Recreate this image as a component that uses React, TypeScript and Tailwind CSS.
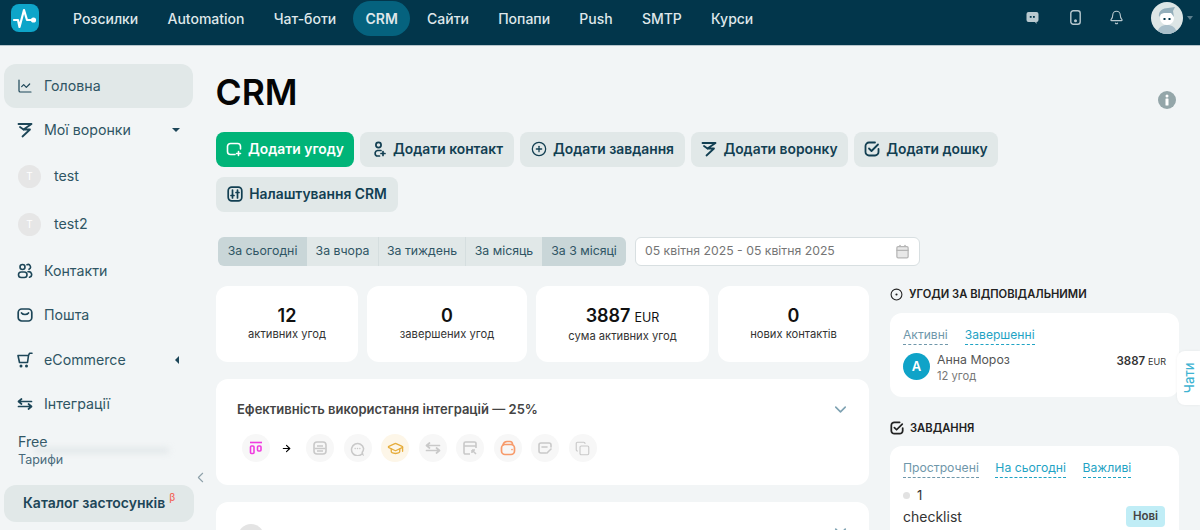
import React from "react";
import { LineChart, CirclePlus, Calendar, CircleDot, GraduationCap, Copy, ArrowRight, ChevronLeft, ChevronDown, Bell } from "lucide-react";

const Funnel = ({ size = 16 }: { size?: number }) => (
  <svg width={size} height={size} viewBox="0 0 16 16" fill="none" stroke="currentColor" strokeWidth="1.8" strokeLinecap="round" strokeLinejoin="round">
    <path d="M1.500 2h13L6.500 7.500h6.500L5.500 14.500" />
    <path d="M3 5l3.500 2.500" />
  </svg>
);
const OpenCheck = ({ size = 16, w = 1.8 }: { size?: number; w?: number }) => (
  <svg width={size} height={size} viewBox="0 0 16 16" fill="none" stroke="currentColor" strokeWidth={w} strokeLinecap="round" strokeLinejoin="round">
    <path d="M14.500 8v3a3.500 3.500 0 0 1-3.500 3.500H5A3.500 3.500 0 0 1 1.500 11V5A3.500 3.500 0 0 1 5 1.500h6" />
    <path d="M5 7.500l2.500 2.500L14 3.500" />
  </svg>
);

const navItems = ["Розсилки", "Automation", "Чат-боти", "CRM", "Сайти", "Попапи", "Push", "SMTP", "Курси"];
const buttons = [
  { label: "Додати угоду", w: "w-[138px]", primary: true, icon: <svg width="16" height="16" viewBox="0 0 16 16" fill="none" stroke="currentColor" strokeWidth="1.6" strokeLinecap="round"><path d="M9 13.500H4.500a3 3 0 0 1-3-3v-5a3 3 0 0 1 3-3h7a3 3 0 0 1 3 3V8" /><path d="M12.500 10.500v4M10.500 12.500h4" /></svg> },
  { label: "Додати контакт", w: "w-[154px]", icon: <svg width="16" height="16" viewBox="0 0 16 16" fill="none" stroke="currentColor" strokeWidth="1.7" strokeLinecap="round"><circle cx="7.500" cy="4" r="2.600" /><path d="M10 9.500H6.500a3 3 0 0 0-1 5.500h3" /><path d="M12 10.500v4M10 12.500h4" /></svg> },
  { label: "Додати завдання", w: "w-[165px]", icon: <CirclePlus size={16} strokeWidth={1.9} /> },
  { label: "Додати воронку", w: "w-[157px]", icon: <Funnel /> },
  { label: "Додати дошку", w: "w-[144px]", icon: <OpenCheck /> },
  { label: "Налаштування CRM", w: "w-[182px]", icon: <svg width="16" height="16" viewBox="0 0 16 16" fill="none" stroke="currentColor" strokeWidth="1.700" strokeLinecap="round"><rect x="1.200" y="1.200" width="13.600" height="13.600" rx="3.500" /><path d="M5.500 4v8M10.500 4v8" /><path d="M4 9.500h3M9 6.500h3" /></svg> },
];
const tabs = [
  { label: "За сьогодні", w: "w-[89px]", on: true, cls: "rounded-l-md" },
  { label: "За вчора", w: "w-[72px]", cls: "border-r border-[#d5dedf]" },
  { label: "За тиждень", w: "w-[87px]", cls: "border-r border-[#d5dedf]" },
  { label: "За місяць", w: "w-[76px]" },
  { label: "За 3 місяці", w: "w-[84px]", on: true, cls: "rounded-r-md" },
];
const stats = [
  { v: "12", l: "активних угод", w: "w-[142px]" },
  { v: "0", l: "завершених угод", w: "w-[160px]" },
  { v: "3887", u: "EUR", l: "сума активних угод", w: "w-[173px]" },
  { v: "0", l: "нових контактів", w: "w-[151px]" },
];

function SideItem({ icon, label, right, h = "h-[44px]", active }: { icon: React.ReactNode; label: string; right?: React.ReactNode; h?: string; active?: boolean }) {
  return (
    <div className={`${h} flex items-center pl-[13px] pr-[12px] rounded-xl text-[14.2px] text-[#2f5564] ${active ? "bg-[#e1e8e8]" : ""}`}>
      <span className="w-[27px] flex items-center text-[#1d4658]">{icon}</span>
      <span className="flex-1">{label}</span>
      {right}
    </div>
  );
}

function SubItem({ label }: { label: string }) {
  return (
    <div className="h-[48px] flex items-center pl-[14px] text-[14.2px] text-[#2f5564]">
      <span className="w-[23px] h-[23px] rounded-full bg-[#e6e6e6] flex items-center justify-center text-white text-[10px] mr-[13px]">T</span>
      {label}
    </div>
  );
}

const IconCircle = ({ children, bg = "bg-[#f7f7f7]", color = "text-[#c9c9c9]" }: { children: React.ReactNode; bg?: string; color?: string }) => (
  <span className={`w-[28px] h-[28px] rounded-full flex items-center justify-center ${bg} ${color}`}>{children}</span>
);

export default function App() {
  return (
    <div className="w-[1200px] h-[530px] overflow-hidden bg-[#f2f5f6] relative text-black" style={{ fontFamily: "Inter, 'Noto Sans', sans-serif" }}>
      <header className="h-[46px] bg-[#02364b] flex items-start pt-[0.500px] border-b border-[#b6c5cc]">
        <div className="mt-[3px] ml-[11px] w-[28px] h-[28px] rounded-lg bg-[#0ea5c9] flex items-center justify-center">
          <svg width="28" height="28" viewBox="0 0 28 28" fill="none" stroke="white" strokeWidth="2.200" strokeLinecap="round" strokeLinejoin="round"><path d="M3 16h4l1.500 7L13 6l3 10h6" /><circle cx="22.500" cy="16" r="1.500" fill="white" /></svg>
        </div>
        <nav className="ml-[22px] flex items-center gap-[5.200px] h-[36px]">
          {navItems.map((n) => (
            <span key={n} className={`h-[35px] px-3 flex items-center rounded-full text-[14px] font-medium text-[#dfe7ea] ${n === "CRM" ? "bg-[#05627e] font-semibold" : ""}`}>{n}</span>
          ))}
        </nav>
        <div className="ml-auto flex items-center h-[34px] text-[#b9c9cf] pr-[7px]">
          <svg width="13" height="14" viewBox="0 0 13 14"><path d="M2.500 1h8A2 2 0 0 1 12.500 3v6a2 2 0 0 1-2 2V13L9 11H2.500a2 2 0 0 1-2-2V3a2 2 0 0 1 2-2z" fill="#b9c9cf" /><rect x="3.800" y="5" width="1.800" height="1.800" fill="#02364b" /><rect x="7" y="5" width="1.800" height="1.800" fill="#02364b" /></svg>
          <svg width="11" height="15" viewBox="0 0 11 15" className="ml-[31px]" fill="none" stroke="currentColor" strokeWidth="1.400"><rect x="0.800" y="0.800" width="9.400" height="13.400" rx="2.500" /><circle cx="5.500" cy="10.800" r="0.800" fill="currentColor" /></svg>
          <Bell size={15} strokeWidth={1.8} className="ml-[28px]" />
          <span className="ml-[27px] w-[32px] h-[32px] rounded-full bg-[#dde6e6] overflow-hidden flex items-center justify-center">
            <svg width="32" height="32" viewBox="0 0 32 32"><path d="M6 32c1-7 5-9 10-9s9 2 10 9z" fill="#a9bfca" /><circle cx="16" cy="16" r="7" fill="#fff" /><path d="M8 15c-1-6 4-9 9-9l7-1-2 4 1 6-3-4-7 0-3 1z" fill="#93aebb" /><rect x="12.500" y="16" width="2" height="2" fill="#02364b" /><rect x="17.500" y="16" width="2" height="2" fill="#02364b" /></svg>
          </span>
          <span className="ml-[4px] w-0 h-0 border-x-[3.500px] border-x-transparent border-t-[4px] border-t-[#5c7d8c]" />
        </div>
      </header>

      <div className="flex">
        <aside className="w-[216px] shrink-0 pl-[4px] pr-[23px] pt-[18px] relative h-[484px]">
          <SideItem active icon={<LineChart size={16} strokeWidth={1.8} />} label="Головна" />
          <SideItem icon={<Funnel />} label="Мої воронки" right={<span className="mr-[1px] w-0 h-0 border-x-[4px] border-x-transparent border-t-[4px] border-t-[#1d4658]" />} />
          <SubItem label="test" />
          <SubItem label="test2" />
          <SideItem h="h-[45px]" icon={<svg width="16" height="16" viewBox="0 0 16 16" fill="none" stroke="currentColor" strokeWidth="1.600"><circle cx="5.500" cy="4" r="2.500" /><rect x="1.500" y="9" width="8.500" height="5.500" rx="2.700" /><path d="M10 1.700a2.400 2.400 0 0 1 2 4.500M11 8.800a2.700 2.700 0 0 1 1.500 5.500" strokeLinecap="round" /></svg>} label="Контакти" />
          <SideItem icon={<svg width="16" height="16" viewBox="0 0 16 16" fill="none" stroke="currentColor" strokeWidth="1.700" strokeLinecap="round"><rect x="1.200" y="2" width="13.600" height="12" rx="3.500" /><path d="M4.500 6c1.500 2 5.500 2 7 0" /></svg>} label="Пошта" />
          <SideItem h="h-[45px]" icon={<svg width="16" height="16" viewBox="0 0 16 16" fill="none" stroke="currentColor" strokeWidth="1.600" strokeLinecap="round" strokeLinejoin="round"><path d="M1 3.500h10.500l-1 7h-8zM11.500 3.500L12.500 1.200h2.500" /><circle cx="4" cy="14" r="0.700" fill="currentColor" /><circle cx="9.500" cy="14" r="0.700" fill="currentColor" /></svg>} label="eCommerce" right={<span className="mr-[2px] w-0 h-0 border-y-[4px] border-y-transparent border-r-[4px] border-r-[#1d4658]" />} />
          <SideItem icon={<svg width="16" height="16" viewBox="0 0 16 16" fill="none" stroke="currentColor" strokeWidth="1.700" strokeLinecap="round" strokeLinejoin="round"><path d="M1.500 5.500h13M4.500 3L1.500 5.500 4.500 8M14.500 10.500h-13M11.500 8l3 2.500-3 2.500" /></svg>} label="Інтеграції" />
          <div className="pl-[14px] pt-[6px] h-[59px] relative">
            <div className="text-[14.2px] leading-[20px] text-[#2f5564]">Free</div>
            <div className="text-[12.500px] leading-[16px] text-[#48697a]">Тарифи</div>
            <div className="absolute left-[30px] top-[22px] w-[135px] h-[5px] rounded bg-[#dfe5e7] blur-[3px]" />
          </div>
          <div className="h-[37px] w-[190px] rounded-xl bg-[#e1e8e8] flex items-center pl-[19px] pb-[3px] text-[14px] font-semibold text-[#1d4658]">
            Каталог застосунків<sup className="ml-[4px] text-[10px] text-[#f2695c] font-medium">β</sup>
          </div>
          <ChevronLeft size={17} strokeWidth={1.500} className="absolute left-[191.500px] top-[422.500px] text-[#8ea1aa]" />
        </aside>

        <main className="flex-1 min-w-0">
          <div className="relative pr-[22px]">
            <h1 className="pt-[25px] h-[86px] -ml-[0.500px] text-[35.500px] leading-[44px] font-semibold text-[#050505]">CRM</h1>
            <svg width="18" height="18" viewBox="0 0 18 18" className="absolute right-[24px] top-[45px]"><circle cx="9" cy="9" r="9" fill="#94a6a9" /><circle cx="9" cy="5" r="1.500" fill="white" /><rect x="7.500" y="7.500" width="3" height="7" rx="0.500" fill="white" /></svg>
          </div>
          <div className="w-[800px] flex flex-wrap gap-x-[6px] gap-y-[10px]">
            {buttons.map((b) => (
              <button key={b.label} className={`${b.w} h-[35px] rounded-lg flex items-center justify-center gap-[6px] pb-[1px] text-[13.850px] font-semibold ${b.primary ? "bg-[#00b478] text-white" : "bg-[#e1e8e8] text-[#123f52]"}`}>
                {b.icon}{b.label}
              </button>
            ))}
          </div>
          <div className="mt-[25px] ml-[2px] flex items-center h-[29px]">
            <div className="flex h-[29px] w-[408px]">
              {tabs.map((t) => (
                <span key={t.label} className={`${t.w} flex items-center justify-center text-[12.300px] text-[#2f5564] ${t.on ? "bg-[#c9d6d8]" : "bg-[#e1e8e8]"} ${t.cls ?? ""}`}>{t.label}</span>
              ))}
            </div>
            <div className="ml-[9px] w-[285px] h-[29px] rounded-md bg-white border border-[#d8dfe1] flex items-center justify-between pl-[9px] pr-[9px] text-[12.250px] text-[#757575]">
              05 квітня 2025 - 05 квітня 2025
              <Calendar size={15} className="text-[#b5b5b5]" fill="#e8e8e8" />
            </div>
          </div>

          <div className="mt-[20px] flex items-start gap-[21px]">
            <div className="w-[653px] shrink-0">
              <div className="flex gap-[9px]">
                {stats.map((s, i) => (
                  <div key={i} className={`${s.w} h-[76px] rounded-xl bg-white flex flex-col items-center pt-[19px]`}>
                    <div className="text-[18px] leading-[21px] font-semibold text-[#111]">{s.v}<span className={s.u ? "ml-[4px] text-[12.500px] font-normal" : "hidden"}>{s.u}</span></div>
                    <div className="text-[11.200px] leading-[16px] text-[#333]">{s.l}</div>
                  </div>
                ))}
              </div>
              <div className="mt-[17px] h-[106px] rounded-xl bg-white pl-[21px] pr-[20px] pt-[21px] relative">
                <div className="text-[13px] leading-[18px] font-semibold text-[#444]">Ефективність використання інтеграцій — 25%</div>
                <ChevronDown size={19} className="absolute right-[19px] top-[21px] text-[#7ea2b2]" />
                <div className="mt-[16px] ml-[5px] flex items-center gap-[9.500px]">
                  <IconCircle color="text-[#f03ce0]"><svg width="14" height="14" viewBox="0 0 14 14" fill="none" stroke="currentColor" strokeWidth="1.600"><path d="M1 1.500h12" /><rect x="1.500" y="5" width="3.500" height="7.500" rx="1" /><rect x="8.500" y="5" width="3.500" height="5" rx="1" /></svg></IconCircle>
                  <ArrowRight size={11} strokeWidth={2.400} className="text-black ml-[1px] mr-[5px]" />
                  <IconCircle><svg width="16" height="16" viewBox="0 0 16 16" fill="none" stroke="currentColor" strokeWidth="1.600"><rect x="2" y="2" width="12" height="12" rx="3" /><path d="M5 6h6M2.500 8.500h11M5 11h6" /></svg></IconCircle>
                  <IconCircle><svg width="15" height="15" viewBox="0 0 16 16" fill="none" stroke="currentColor" strokeWidth="1.600" strokeLinecap="round"><path d="M13 13.500A6.500 6.500 0 1 1 14.500 8c0 1.500-.5 3-1.500 4l.5 2z" /><path d="M5.500 8h.01M8 8h.01M10.500 8h.01" /></svg></IconCircle>
                  <IconCircle bg="bg-[#fdf6e8]" color="text-[#e6ad3c]"><GraduationCap size={17} strokeWidth={1.900} /></IconCircle>
                  <IconCircle><svg width="16" height="16" viewBox="0 0 16 16" fill="none" stroke="currentColor" strokeWidth="1.700" strokeLinecap="round" strokeLinejoin="round"><path d="M1.500 5.500h13M4.500 3L1.500 5.500 4.500 8M14.500 10.500h-13M11.500 8l3 2.500-3 2.500" /></svg></IconCircle>
                  <IconCircle><svg width="16" height="16" viewBox="0 0 16 16" fill="none" stroke="currentColor" strokeWidth="1.600"><path d="M8 14H3.500A1.500 1.500 0 0 1 2 12.500v-9A1.500 1.500 0 0 1 3.500 2h9A1.500 1.500 0 0 1 14 3.500V8M2 6h12" /><path d="M10 10l4 4M10 10v3M10 10h3" /></svg></IconCircle>
                  <IconCircle color="text-[#f79a6a]"><svg width="16" height="16" viewBox="0 0 16 16" fill="none" stroke="currentColor" strokeWidth="1.700"><rect x="1.500" y="4.500" width="13" height="10" rx="3.500" /><path d="M3 5c.5-2 2-3.500 4-3.500h3c1.500 0 2.500 1.500 2.500 3M12 9.500h.01" strokeLinecap="round" /></svg></IconCircle>
                  <IconCircle><svg width="16" height="16" viewBox="0 0 16 16" fill="none" stroke="currentColor" strokeWidth="1.600" strokeLinecap="round"><path d="M14 7V5a2 2 0 0 0-2-2H4a2 2 0 0 0-2 2v6a2 2 0 0 0 2 2h5" /><path d="M5 7h5M10 13l4-4" /></svg></IconCircle>
                  <IconCircle><Copy size={15} strokeWidth={1.800} /></IconCircle>
                </div>
              </div>
              <div className="mt-[17px] h-[60px] rounded-xl bg-white pl-[22px] pt-[22px] relative">
                <span className="block w-[26px] h-[26px] rounded-full bg-[#e4e4e4]" />
                <ChevronDown size={19} className="absolute right-[19px] top-[20px] text-[#7ea2b2]" />
              </div>
            </div>

            <div className="w-[289px] shrink-0 -mt-[1px]">
              <div className="h-[18px] flex items-center gap-[6px] text-[11.200px] font-semibold text-[#222]">
                <CircleDot size={13} strokeWidth={2} /> УГОДИ ЗА ВІДПОВІДАЛЬНИМИ
              </div>
              <div className="mt-[10px] h-[84px] rounded-xl bg-white px-[13px] pt-[14px]">
                <div className="flex gap-[17px] text-[12.100px] leading-[16px]">
                  <span className="text-[#6f97aa] border-b border-dashed border-[#6f97aa] pb-[1px]">Активні</span>
                  <span className="text-[#1fa3c4] border-b border-dashed border-[#1fa3c4] pb-[1px]">Завершенні</span>
                </div>
                <div className="mt-[8px] flex items-start">
                  <span className="w-[27px] h-[27px] rounded-full bg-[#0fa3c8] text-white text-[13px] font-semibold flex items-center justify-center">А</span>
                  <div className="ml-[7px] flex-1 -mt-[1px]">
                    <div className="text-[12.300px] leading-[16px] text-[#555]">Анна Мороз</div>
                    <div className="text-[11.200px] leading-[16px] text-[#777]">12 угод</div>
                  </div>
                  <div className="text-[11.500px] leading-[16px] font-semibold text-[#333]">3887 <span className="text-[9px] font-normal">EUR</span></div>
                </div>
              </div>
              <div className="mt-[22px] h-[18px] flex items-center gap-[6px] text-[11.200px] font-semibold text-[#222]">
                <OpenCheck size={14} w={2} /> ЗАВДАННЯ
              </div>
              <div className="mt-[9px] h-[120px] rounded-xl bg-white pl-[13px] pr-[14px] pt-[14px]">
                <div className="flex gap-[16.500px] text-[12.200px] leading-[16px]">
                  <span className="text-[#6f97aa] border-b border-dashed border-[#6f97aa] pb-[1px]">Прострочені</span>
                  <span className="text-[#1fa3c4] border-b border-dashed border-[#1fa3c4] pb-[1px]">На сьогодні</span>
                  <span className="text-[#1fa3c4] border-b border-dashed border-[#1fa3c4] pb-[1px]">Важливі</span>
                </div>
                <div className="mt-[9px] flex items-center gap-[7px] text-[13px] leading-[16px] text-[#333]">
                  <span className="w-[7px] h-[7px] rounded-full bg-[#e2e2e2]" />1
                </div>
                <div className="mt-[3px] flex items-center justify-between">
                  <span className="text-[14px] text-[#333]">checklist</span>
                  <span className="w-[39px] h-[21px] rounded bg-[#c0edf6] flex items-center justify-center text-[11.500px] font-semibold text-[#444]">Нові</span>
                </div>
              </div>
            </div>
          </div>
        </main>
      </div>

      <div className="absolute left-[1177px] top-[351px] w-[23px] h-[54px] rounded-l-lg bg-white shadow-[0_0_3px_rgba(0,0,0,0.06)] flex items-center justify-center pl-[2px]">
        <span className="text-[13px] font-medium text-[#3fb4d2] -rotate-90 whitespace-nowrap">Чати</span>
      </div>
    </div>
  );
}
